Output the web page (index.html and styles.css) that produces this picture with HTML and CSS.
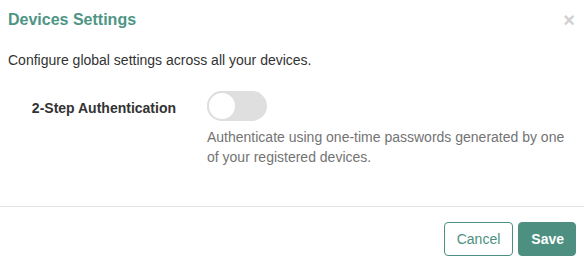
FILE: index.html
```html
<!DOCTYPE html>
<html>
<head>
<meta charset="utf-8">
<link rel="stylesheet" href="styles.css">
</head>
<body>
<div class="modal">
  <div class="modal-header">
    <h4 class="modal-title">Devices Settings</h4>
    <span class="close">×</span>
  </div>
  <div class="modal-body">
    <p class="intro">Configure global settings across all your devices.</p>
    <div class="form-row">
      <label class="label">2-Step Authentication</label>
      <div class="control">
        <div class="toggle"><span class="knob"></span></div>
        <p class="help">Authenticate using one-time passwords generated by one of your registered devices.</p>
      </div>
    </div>
  </div>
  <div class="modal-footer">
    <button class="btn btn-default">Cancel</button>
    <button class="btn btn-primary">Save</button>
  </div>
</div>
</body>
</html>
```
FILE: styles.css
```css
html, body {
  margin: 0;
  padding: 0;
  background: #fff;
}
body {
  font-family: "Liberation Sans", Arial, sans-serif;
  font-size: 14px;
  line-height: 20px;
  color: #333;
}
.modal {
  width: 584px;
}
.modal-header {
  display: flex;
  justify-content: space-between;
  align-items: flex-start;
  padding: 10px 8px 0 8px;
  height: 19px;
}
.modal-title {
  margin: 0;
  font-size: 16px;
  line-height: 20px;
  font-weight: bold;
  color: #4e9585;
}
.close {
  font-size: 20px;
  font-weight: bold;
  line-height: 20px;
  color: #d0d0d0;
  margin-right: 1px;
  margin-top: 0;
}
.modal-body {
  padding: 21px 8px 39px 8px;
}
.intro {
  margin: 0;
}
.form-row {
  display: grid;
  grid-template-columns: 168px 1fr;
  column-gap: 31px;
  margin-top: 21px;
}
.label {
  text-align: right;
  font-weight: bold;
  padding-top: 7px;
  color: #333;
}
.toggle {
  width: 60px;
  height: 30px;
  box-sizing: border-box;
  border-radius: 15px;
  background: #dfdfdf;
  position: relative;
}
.knob {
  position: absolute;
  left: 0;
  top: 0;
  width: 30px;
  height: 30px;
  box-sizing: border-box;
  border-radius: 50%;
  background: #fff;
  border: 2px solid #dfdfdf;
}
.help {
  margin: 6px 0 0 0;
  color: #737373;
}
.modal-footer {
  border-top: 1px solid #e5e5e5;
  padding: 15px 8px;
  display: flex;
  justify-content: flex-end;
  gap: 5px;
}
.btn {
  font-family: "Liberation Sans", Arial, sans-serif;
  font-size: 14px;
  line-height: 20px;
  padding: 6px 12px;
  border-radius: 4px;
  border: 1px solid #4d8f80;
  cursor: pointer;
  height: 34px;
}
.btn-default {
  background: #fff;
  color: #4d8f80;
}
.btn-primary {
  background: #4d8f80;
  color: #fff;
  font-weight: bold;
  padding: 6px 11px 6px 12px;
}
```
